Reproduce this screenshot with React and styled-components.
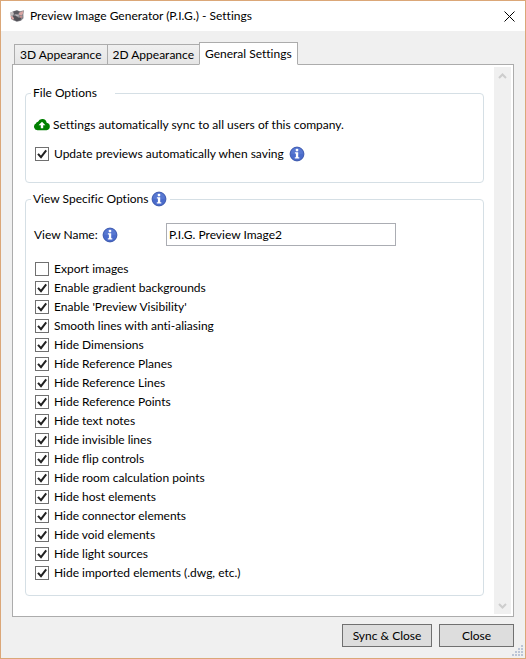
import React, { useState } from 'react'
import styled, { createGlobalStyle } from 'styled-components';

const VIEW_OPTIONS = [
    'Export images',
    'Enable gradient backgrounds',
    "Enable 'Preview Visibility'",
    'Smooth lines with anti-aliasing',
    'Hide Dimensions',
    'Hide Reference Planes',
    'Hide Reference Lines',
    'Hide Reference Points',
    'Hide text notes',
    'Hide invisible lines',
    'Hide flip controls',
    'Hide room calculation points',
    'Hide host elements',
    'Hide connector elements',
    'Hide void elements',
    'Hide light sources',
    'Hide imported elements (.dwg, etc.)',
]

const TABS = ['3D Appearance', '2D Appearance', 'General Settings']

const InfoIcon = () => (
    <Icon width="16" height="16" viewBox="0 0 16 16" aria-hidden="true">
        <circle cx="8" cy="8" r="6.9" fill="#4a6bcb" stroke="#3c58ad" strokeWidth="1" />
        <path d="M2 7.600a6 6 0 0 1 12 0q-6 2.200-12 0z" fill="#6484d8" opacity="0.5" />
        <circle cx="8" cy="4.100" r="1.400" fill="#fff" />
        <path d="M5.900 6.300h3.300v4.900h1.100v1.300H5.800v-1.300h1.100V7.600h-1z" fill="#fff" />
    </Icon>
)

const CloudIcon = () => (
    <Icon width="16" height="14" viewBox="0 0 16 14" aria-hidden="true">
        <path d="M3.400 12.200A3.500 3.500 0 0 1 1.900 5.600 2.600 2.600 0 0 1 4 3.700 4.600 4.600 0 0 1 12.700 4.700 3.800 3.800 0 0 1 12.600 12.200z" fill="#008000" />
        <path d="M8 3.700L11.400 7.300H9.200v3H6.800v-3H4.600z" fill="#fff" />
    </Icon>
)

const PigIcon = () => (
    <Icon width="16" height="16" viewBox="0 0 16 16" aria-hidden="true">
        <path d="M1.500 4.500L5 3l3-.8 3 1 4-1-.6 4 .1 4-2.500 2.500-4 1-3.500-1.200-2.500-1.500z" fill="#87858a" />
        <path d="M4.500 3.500L8 2.500l3 1.500-2 2-4 .5z" fill="#5c5a60" />
        <path d="M4 7.500l3 .5 2.500 1.800 3-.6-1 3-4 1-3-2z" fill="#515056" />
        <path d="M1.200 4.500l2.600-.7L4.800 6 3 8 1.600 7z" fill="#c5bfc0" />
        <path d="M10.500 4.500l3.800-1.500-.3 2.500-1.500 2L9.500 6.600z" fill="#d9a5a3" />
        <path d="M1.400 7.800l2.300.6 1.500 2.400-2 .9z" fill="#dda6a3" />
        <path d="M6 6.200l3.500.7.500 1.500-2.800-.4z" fill="#b9b6ba" />
        <path d="M10.800 8l2.800.2-.8 1.600-2-.3z" fill="#cf918f" />
    </Icon>
)

const Check = ({ label, defaultChecked = true, children }) => (
    <CheckLabel>
        <CheckBox>
            <input type="checkbox" defaultChecked={defaultChecked} />
            <svg width="14" height="14" viewBox="0 0 14 14" aria-hidden="true">
                <path d="M3 6.800L6 10.200 11.200 3.400" fill="none" stroke="#212121" strokeWidth="2" />
            </svg>
        </CheckBox>
        {label}
        {children}
    </CheckLabel>
)

const ScrollBar = () => (
    <Track>
        <ScrollButton aria-label="Scroll up" disabled>
            <svg width="9" height="6" viewBox="0 0 9 6"><path d="M1 5l3.500-3.500L8 5" /></svg>
        </ScrollButton>
        <ScrollButton aria-label="Scroll down" disabled>
            <svg width="9" height="6" viewBox="0 0 9 6"><path d="M1 1l3.500 3.500L8 1" /></svg>
        </ScrollButton>
    </Track>
)

const ResizeGrip = () => (
    <Grip width="11" height="11" viewBox="0 0 11 11" aria-hidden="true">
        {[[9, 0], [6, 3], [9, 3], [3, 6], [6, 6], [9, 6], [0, 9], [3, 9], [6, 9], [9, 9]].map(([x, y]) => (
            <rect key={`${x}-${y}`} x={x} y={y} width="2" height="2" fill="#bcc5d6" />
        ))}
    </Grip>
)

export default function App() {
    const [tab, setTab] = useState('General Settings')
    const [viewName, setViewName] = useState('P.I.G. Preview Image2')

    return (
        <Dialog>
            <GlobalStyle />
            <TitleBar>
                <PigIcon />
                <Title>Preview Image Generator (P.I.G.) - Settings</Title>
                <CloseButton aria-label="Close window">
                    <svg width="11" height="11" viewBox="0 0 11 11">
                        <path d="M.5.500l10 10M10.500.500l-10 10" stroke="#000" fill="none" />
                    </svg>
                </CloseButton>
            </TitleBar>
            <Body>
                <TabList role="tablist">
                    {TABS.map((name) => (
                        <Tab key={name} role="tab" aria-selected={tab === name} $active={tab === name} onClick={() => setTab(name)}>
                            {name}
                        </Tab>
                    ))}
                </TabList>
                <Panel role="tabpanel">
                    <Content>
                        <Group>
                            <Legend $wide>File Options</Legend>
                            <SyncNote>
                                <CloudIcon />
                                Settings automatically sync to all users of this company.
                            </SyncNote>
                            <Check label="Update previews automatically when saving">
                                <InfoIcon />
                            </Check>
                        </Group>
                        <Group $grow>
                            <Legend>View Specific Options <InfoIcon /></Legend>
                            <NameRow>
                                <NameLabel htmlFor="view-name">View Name: <InfoIcon /></NameLabel>
                                <NameInput id="view-name" value={viewName} onChange={(e) => setViewName(e.target.value)} />
                            </NameRow>
                            {VIEW_OPTIONS.map((label) => (
                                <Check key={label} label={label} defaultChecked={label !== 'Export images'} />
                            ))}
                        </Group>
                    </Content>
                    <ScrollBar />
                </Panel>
                <Footer>
                    <Button $wide>Sync &amp; Close</Button>
                    <Button>Close</Button>
                </Footer>
            </Body>
            <ResizeGrip />
        </Dialog>
    )
}

const GlobalStyle = createGlobalStyle`
    body {
        margin: 0;
    }
    *, *::before, *::after {
        box-sizing: border-box;
    }
    body, button, input {
        font-family: 'Segoe UI', Lato, 'Open Sans', sans-serif;
        font-size: 12px;
        line-height: 16px;
        font-variant-ligatures: none;
        color: #000;
    }
`;

const Dialog = styled.div`
    position: relative;
    display: flex;
    flex-direction: column;
    min-height: 100vh;
    border: 1px solid #dba778;
    background-color: #f0f0f0;
`;

const Icon = styled.svg`
    flex: none;
`;

const TitleBar = styled.header`
    display: flex;
    align-items: center;
    height: 30px;
    padding: 0 10px 0 8px;
    background-color: #fff;
`;

const Title = styled.h1`
    flex: 1;
    margin: 0 0 0 5px;
    font-size: 12px;
    font-weight: 400;
`;

const CloseButton = styled.button`
    display: flex;
    padding: 0;
    border: none;
    background: none;
`;

const Body = styled.main`
    flex: 1;
    display: flex;
    flex-direction: column;
    padding: 11px;
`;

const TabList = styled.div`
    display: flex;
    align-items: flex-end;
    padding-left: 2px;
    margin-bottom: -1px;
`;

const Tab = styled.button`
    height: ${(props) => (props.$active ? 23 : 21)}px;
    padding: 0 5px;
    margin-right: -1px;
    border: 1px solid #acacac;
    border-bottom-color: ${(props) => (props.$active ? '#fff' : '#acacac')};
    background: ${(props) => (props.$active ? '#fff' : 'linear-gradient(#f0f0f0, #e5e5e5)')};
    z-index: ${(props) => (props.$active ? 1 : 0)};
`;

const Panel = styled.section`
    flex: 1;
    display: flex;
    padding: 2px 2px 2px 12px;
    border: 1px solid #acacac;
    background-color: #fff;
`;

const Content = styled.div`
    flex: 1;
    display: flex;
    flex-direction: column;
    gap: 8px;
    padding: 18px 10px 18px 0;
`;

const Group = styled.fieldset`
    flex: ${(props) => (props.$grow ? 1 : 'none')};
    min-width: 0;
    margin: 0;
    padding: 16px 9px ${(props) => (props.$grow ? 12 : 19)}px;
    border: 1px solid #d5dfe5;
    border-radius: 4px;
`;

const Legend = styled.legend`
    display: flex;
    align-items: center;
    gap: 3px;
    height: 16px;
    padding: 0 ${(props) => (props.$wide ? 18 : 3)}px 0 2px;
    margin-left: -4px;
`;

const SyncNote = styled.p`
    display: flex;
    align-items: center;
    gap: 3px;
    height: 16px;
    margin: 0 0 11px -1px;
`;

const CheckLabel = styled.label`
    display: flex;
    align-items: center;
    gap: 5px;
    height: 19px;
`;

const CheckBox = styled.span`
    display: grid;
    width: 14px;
    height: 14px;
    input, svg {
        grid-area: 1 / 1;
    }
    input {
        appearance: none;
        width: 14px;
        height: 14px;
        margin: 0;
        border: 1px solid #707070;
        background-color: #fff;
    }
    svg {
        visibility: hidden;
        pointer-events: none;
    }
    input:checked + svg {
        visibility: visible;
    }
`;

const NameRow = styled.div`
    display: flex;
    align-items: center;
    margin: 0 0 13px -1px;
`;

const NameLabel = styled.label`
    display: flex;
    align-items: center;
    gap: 4px;
    width: 132px;
`;

const NameInput = styled.input`
    width: 230px;
    height: 23px;
    padding: 0 2px;
    border: 1px solid #abadb3;
    background-color: #fff;
    outline: none;
`;

const Track = styled.div`
    display: flex;
    flex-direction: column;
    justify-content: space-between;
    width: 17px;
    background-color: #f0f0f0;
`;

const ScrollButton = styled.button`
    display: flex;
    align-items: center;
    justify-content: center;
    height: 17px;
    padding: 0;
    border: none;
    background: none;
    path {
        fill: none;
        stroke: #cdcdcd;
        stroke-width: 2;
    }
`;

const Footer = styled.footer`
    display: flex;
    justify-content: flex-end;
    gap: 7px;
    padding-top: 7px;
`;

const Button = styled.button`
    width: ${(props) => (props.$wide ? 90 : 75)}px;
    height: 23px;
    padding: 0;
    border: 1px solid #707070;
    background-color: #ddd;
`;

const Grip = styled.svg`
    position: absolute;
    right: 2px;
    bottom: 2px;
`;
